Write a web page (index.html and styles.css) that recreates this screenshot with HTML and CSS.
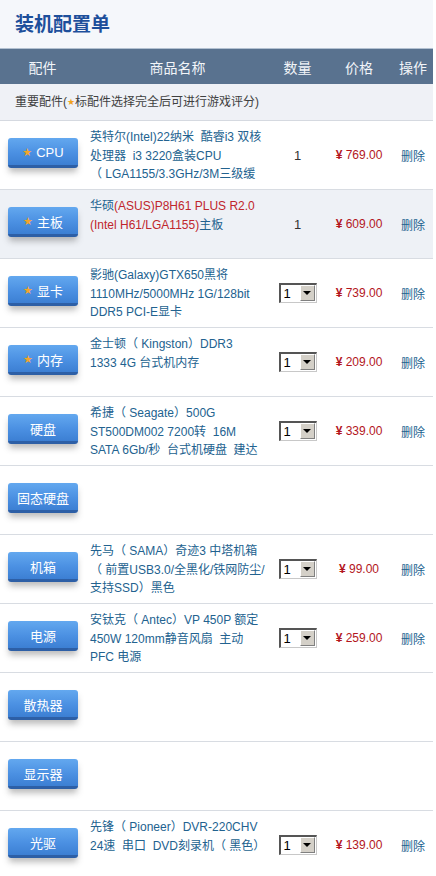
FILE: index.html
```html
<!DOCTYPE html>
<html lang="zh-CN">
<head>
<meta charset="utf-8">
<title>装机配置单</title>
<link rel="stylesheet" href="styles.css">
</head>
<body>
<div class="page">
  <h1 class="title">装机配置单</h1>
  <div class="table">
    <div class="thead">
      <div class="th">配件</div>
      <div class="th">商品名称</div>
      <div class="th">数量</div>
      <div class="th">价格</div>
      <div class="th">操作</div>
    </div>
    <div class="section">重要配件(<span class="star-sm">★</span>标配件选择完全后可进行游戏评分)</div>

    <div class="row">
      <div class="c-part"><span class="btn"><span class="star">★</span>CPU</span></div>
      <div class="c-name">英特尔(Intel)22纳米&nbsp; 酷睿i3 双核<br>处理器&nbsp; i3 3220盒装CPU<br>（ LGA1155/3.3GHz/3M三级缓</div>
      <div class="c-qty"><span class="qty">1</span></div>
      <div class="c-price"><span class="price"><b>¥</b> 769.00</span></div>
      <div class="c-op"><span class="del">删除</span></div>
    </div>

    <div class="row alt">
      <div class="c-part"><span class="btn"><span class="star">★</span>主板</span></div>
      <div class="c-name">华硕<span class="red">(ASUS)P8H61 PLUS R2.0</span><br><span class="red">(Intel H61/LGA1155)</span>主板</div>
      <div class="c-qty"><span class="qty">1</span></div>
      <div class="c-price"><span class="price"><b>¥</b> 609.00</span></div>
      <div class="c-op"><span class="del">删除</span></div>
    </div>

    <div class="row">
      <div class="c-part"><span class="btn"><span class="star">★</span>显卡</span></div>
      <div class="c-name">影驰(Galaxy)GTX650黑将<br>1110MHz/5000MHz 1G/128bit<br>DDR5 PCI-E显卡</div>
      <div class="c-qty"><span class="sel"><span class="sel-val">1</span><span class="sel-btn"><span class="tri"></span></span></span></div>
      <div class="c-price"><span class="price"><b>¥</b> 739.00</span></div>
      <div class="c-op"><span class="del">删除</span></div>
    </div>

    <div class="row">
      <div class="c-part"><span class="btn"><span class="star">★</span>内存</span></div>
      <div class="c-name">金士顿（ Kingston）DDR3<br>1333 4G 台式机内存</div>
      <div class="c-qty"><span class="sel"><span class="sel-val">1</span><span class="sel-btn"><span class="tri"></span></span></span></div>
      <div class="c-price"><span class="price"><b>¥</b> 209.00</span></div>
      <div class="c-op"><span class="del">删除</span></div>
    </div>

    <div class="row">
      <div class="c-part"><span class="btn">硬盘</span></div>
      <div class="c-name">希捷（ Seagate）500G<br>ST500DM002 7200转&nbsp; 16M<br>SATA 6Gb/秒&nbsp; 台式机硬盘&nbsp; 建达</div>
      <div class="c-qty"><span class="sel"><span class="sel-val">1</span><span class="sel-btn"><span class="tri"></span></span></span></div>
      <div class="c-price"><span class="price"><b>¥</b> 339.00</span></div>
      <div class="c-op"><span class="del">删除</span></div>
    </div>

    <div class="row">
      <div class="c-part"><span class="btn">固态硬盘</span></div>
      <div class="c-name"></div>
      <div class="c-qty"></div>
      <div class="c-price"></div>
      <div class="c-op"></div>
    </div>

    <div class="row">
      <div class="c-part"><span class="btn">机箱</span></div>
      <div class="c-name">先马（ SAMA）奇迹3 中塔机箱<br>（ 前置USB3.0/全黑化/铁网防尘/<br>支持SSD）黑色</div>
      <div class="c-qty"><span class="sel"><span class="sel-val">1</span><span class="sel-btn"><span class="tri"></span></span></span></div>
      <div class="c-price"><span class="price"><b>¥</b> 99.00</span></div>
      <div class="c-op"><span class="del">删除</span></div>
    </div>

    <div class="row">
      <div class="c-part"><span class="btn">电源</span></div>
      <div class="c-name">安钛克（ Antec）VP 450P 额定<br>450W 120mm静音风扇&nbsp; 主动<br>PFC 电源</div>
      <div class="c-qty"><span class="sel"><span class="sel-val">1</span><span class="sel-btn"><span class="tri"></span></span></span></div>
      <div class="c-price"><span class="price"><b>¥</b> 259.00</span></div>
      <div class="c-op"><span class="del">删除</span></div>
    </div>

    <div class="row">
      <div class="c-part"><span class="btn">散热器</span></div>
      <div class="c-name"></div>
      <div class="c-qty"></div>
      <div class="c-price"></div>
      <div class="c-op"></div>
    </div>

    <div class="row">
      <div class="c-part"><span class="btn">显示器</span></div>
      <div class="c-name"></div>
      <div class="c-qty"></div>
      <div class="c-price"></div>
      <div class="c-op"></div>
    </div>

    <div class="row">
      <div class="c-part"><span class="btn">光驱</span></div>
      <div class="c-name">先锋（ Pioneer）DVR-220CHV<br>24速&nbsp; 串口&nbsp; DVD刻录机（ 黑色）</div>
      <div class="c-qty"><span class="sel"><span class="sel-val">1</span><span class="sel-btn"><span class="tri"></span></span></span></div>
      <div class="c-price"><span class="price"><b>¥</b> 139.00</span></div>
      <div class="c-op"><span class="del">删除</span></div>
    </div>
  </div>
</div>
</body>
</html>
```
FILE: styles.css
```css
* { box-sizing: border-box; }
html, body {
  margin: 0;
  padding: 0;
  background: #ffffff;
  font-family: "Liberation Sans", "Noto Sans CJK SC", sans-serif;
  font-size: 12px;
  color: #333;
}
.page {
  width: 433px;
  background: #ffffff;
}
.title {
  margin: 0;
  height: 48px;
  line-height: 46px;
  padding-left: 15px;
  font-size: 19px;
  font-weight: bold;
  color: #1d4f9b;
  background: #f5f7fb;
  font-family: "Noto Sans CJK SC", sans-serif;
}
.thead {
  display: grid;
  grid-template-columns: 85px 185px 55px 68px 40px;
  height: 36px;
  background: #59728f;
  border-top: 1px solid #b3c1d1;
}
.th {
  display: flex;
  align-items: center;
  justify-content: center;
  color: #f2f5f9;
  font-size: 14px;
  font-family: "Noto Sans CJK SC", sans-serif;
}
.section {
  height: 37px;
  line-height: 36px;
  padding-left: 15px;
  background: #eff1f6;
  border-bottom: 1px solid #d5d9e0;
  color: #404040;
  font-size: 12px;
}
.star-sm {
  color: #f0a21c;
  font-size: 9px;
  font-family: "DejaVu Sans", sans-serif;
  position: relative;
  top: -1px;
}
.row {
  display: grid;
  grid-template-columns: 85px 185px 55px 68px 40px;
  height: 69px;
  border-bottom: 1px solid #d8dce2;
  background: #ffffff;
}
.row.alt { background: #eef1f6; }
.c-part {
  display: flex;
  align-items: center;
  padding-left: 8px;
  padding-bottom: 4px;
}
.btn {
  display: flex;
  align-items: center;
  justify-content: center;
  width: 70px;
  height: 30px;
  border-radius: 3px;
  background: linear-gradient(#63a8ef, #4b90e2 55%, #3c7fd3);
  border-bottom: 3px solid #2d5fa6;
  box-shadow: 0 5px 6px -1px rgba(60, 60, 60, 0.35);
  color: #ffffff;
  font-size: 13px;
  font-family: "Liberation Sans", "Noto Sans CJK SC", sans-serif;
  padding-top: 1px;
}
.star {
  color: #f4a52a;
  font-size: 11px;
  margin-right: 4px;
  font-family: "DejaVu Sans", sans-serif;
}
.c-name {
  padding-top: 7px;
  padding-left: 5px;
  line-height: 18.5px;
  font-size: 12px;
  color: #22628f;
  white-space: nowrap;
  overflow: hidden;
}
.red { color: #c0262c; }
.c-qty, .c-price, .c-op {
  display: flex;
  align-items: center;
  justify-content: center;
}
.qty { font-size: 13px; color: #333; }
.price {
  color: #b3161d;
  font-size: 12px;
  white-space: nowrap;
}
.price b { font-weight: bold; }
.del {
  color: #22628f;
  font-size: 12px;
}
.sel {
  display: flex;
  width: 38px;
  height: 20px;
  border-top: 2px solid #555;
  border-left: 2px solid #555;
  border-right: 1px solid #c8c8c8;
  border-bottom: 1px solid #c8c8c8;
  background: #fff;
}
.sel-val {
  flex: 1;
  font-size: 13px;
  line-height: 17px;
  padding-left: 3px;
  color: #000;
}
.sel-btn {
  width: 15px;
  height: 16px;
  margin: 0 1px 0 0;
  background: #d4d0c8;
  border-top: 1px solid #fff;
  border-left: 1px solid #fff;
  border-right: 1px solid #808080;
  border-bottom: 1px solid #808080;
  display: flex;
  align-items: center;
  justify-content: center;
}
.tri {
  width: 0;
  height: 0;
  border-left: 4px solid transparent;
  border-right: 4px solid transparent;
  border-top: 4px solid #000;
}
```
